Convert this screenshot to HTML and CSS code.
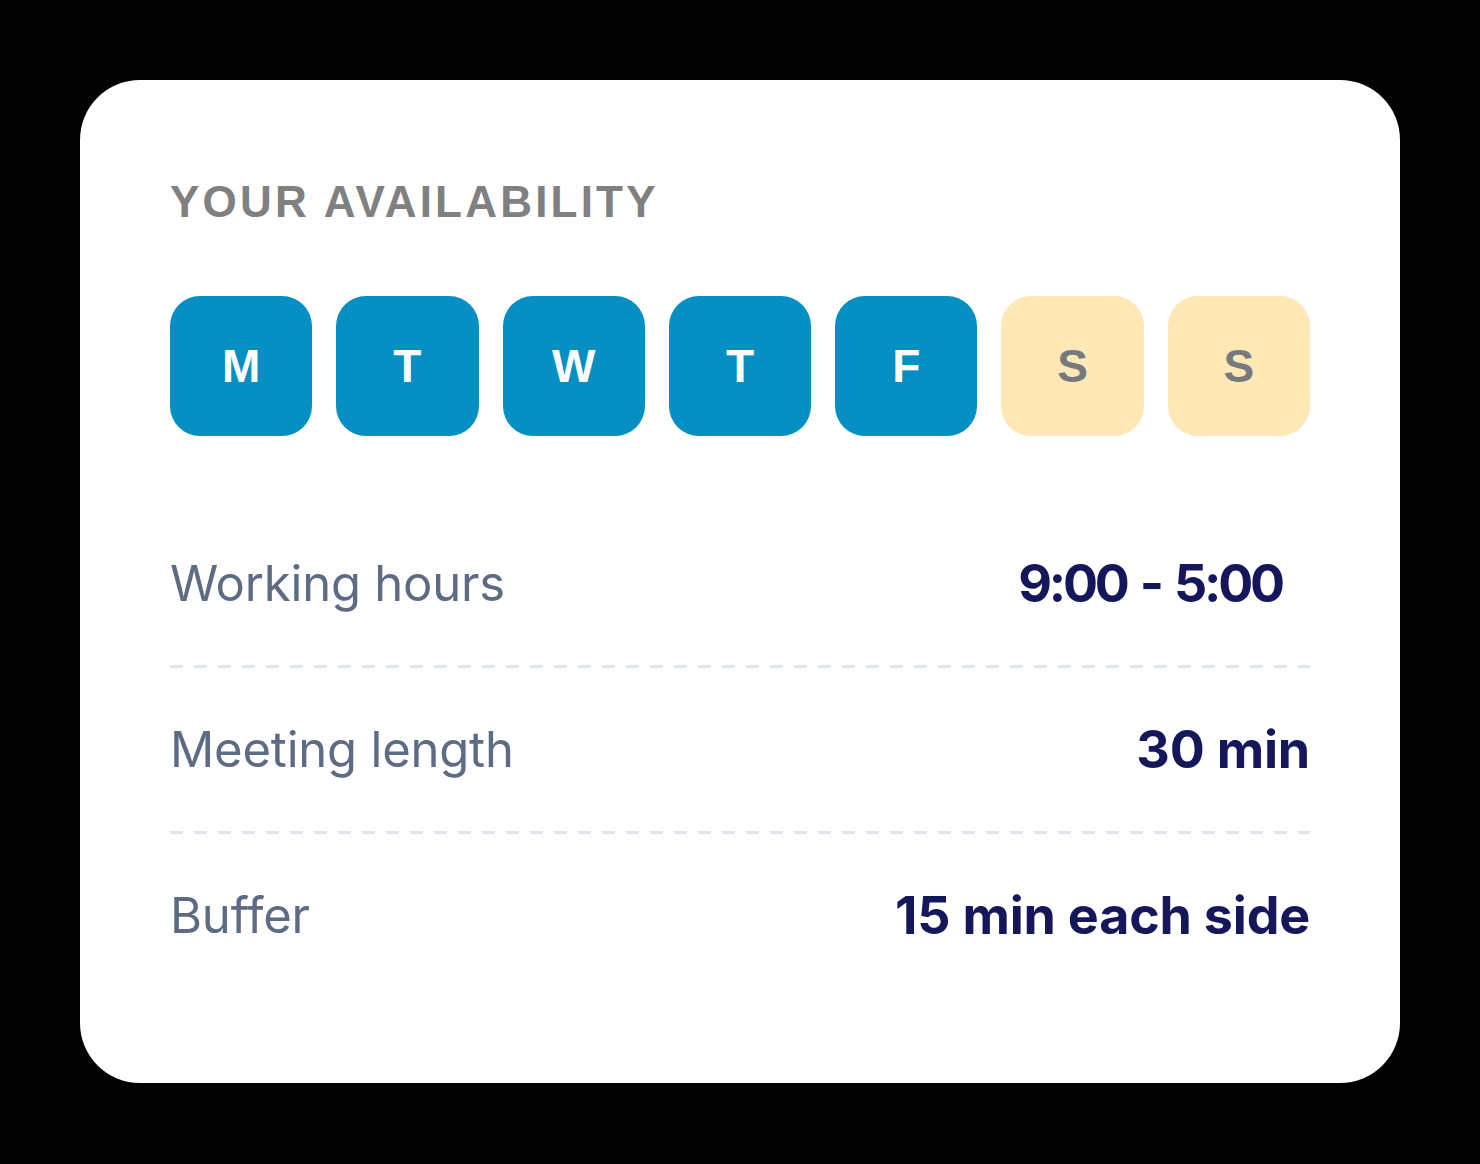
FILE: index.html
```html
<!DOCTYPE html>
<html lang="en">
<head>
    <meta charset="UTF-8">
    <meta name="viewport" content="width=device-width, initial-scale=1.0">
    <title>Your availability</title>
    <link rel="stylesheet" href="styles.css">
</head>
<body>
    <div class="card">
        <h2 class="titulo">YOUR AVAILABILITY</h2>

        <div class="dias">
            <div class="dia activo">M</div>
            <div class="dia activo">T</div>
            <div class="dia activo">W</div>
            <div class="dia activo">T</div>
            <div class="dia activo">F</div>
            <div class="dia libre">S</div>
            <div class="dia libre">S</div>
        </div>

        <div class="filas">
            <div class="fila">
                <span class="etiqueta">Working hours</span>
                <span class="valor horas">9:00 - 5:00</span>
            </div>
            <div class="linea"></div>
            <div class="fila">
                <span class="etiqueta">Meeting length</span>
                <span class="valor">30 min</span>
            </div>
            <div class="linea"></div>
            <div class="fila">
                <span class="etiqueta">Buffer</span>
                <span class="valor">15 min each side</span>
            </div>
        </div>
    </div>
</body>
</html>
```

FILE: styles.css
```css
body {
    margin: 0;
    padding: 80px;
    background-color: #000;
    font-family: Inter, "Liberation Sans", sans-serif;
}
.card {
    width: 1320px;
    height: 1003px;
    box-sizing: border-box;
    background: #fff;
    border-radius: 60px;
    padding: 100px 90px 0 90px;
}
.titulo {
    margin: 0;
    font-family: "Liberation Sans", Arial, sans-serif;
    font-size: 44px;
    line-height: 44px;
    font-weight: bold;
    letter-spacing: 3.2px;
    color: #808080;
}
.dias {
    display: flex;
    gap: 24px;
    margin-top: 72px;
}
.dia {
    flex: 1;
    height: 140px;
    border-radius: 30px;
    display: flex;
    align-items: center;
    justify-content: center;
    font-family: "Liberation Sans", Arial, sans-serif;
    font-size: 46px;
    font-weight: bold;
}
.activo {
    background-color: #058fc2;
    color: #fff;
}
.libre {
    background-color: #fee8b5;
    color: #777a7d;
}
.filas {
    margin-top: 66px;
}
.fila {
    display: flex;
    justify-content: space-between;
    align-items: center;
    padding: 55px 0;
    line-height: 53px;
}
.etiqueta {
    font-size: 49px;
    letter-spacing: -0.2px;
    color: #5d6b84;
}
.valor {
    font-size: 52px;
    font-weight: 700;
    letter-spacing: -0.2px;
    color: #14175a;
}
.horas {
    padding-right: 28px;
    letter-spacing: -3.2px;
    word-spacing: 4px;
}
.linea {
    height: 3px;
    background-image: repeating-linear-gradient(to right, #dfe5ec 0, #dfe5ec 13px, transparent 13px, transparent 24px);
}
```
